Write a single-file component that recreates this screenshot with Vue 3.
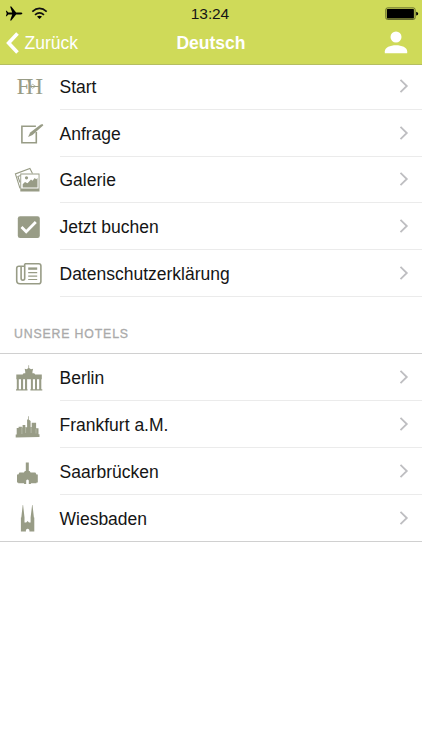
<template>
  <div class="screen">
    <header class="top">
      <div class="status-bar">
        <svg class="status-left" viewBox="0 0 50 20">
          <path d="M22.300 6.500c0-.6-.7-.9-1.700-.9h-4.500L11.300-.5h-1.200l2.100 6.100H8.300L6.700 3.700H5.900l.8 2.800-.8 2.800h.8l1.600-1.900h3.900l-2.100 6.100h1.200l4.800-6.100h4.500c1 0 1.700-.3 1.700-.9z" />
          <g class="wifi">
            <path d="M32.300 4.600Q39.500 -1.800 46.700 4.600" />
            <path d="M35 7.800Q39.500 3.900 44 7.800" />
          </g>
          <path d="M37 9.600Q39.500 7.900 42 9.600L39.500 12.100z" />
        </svg>
        <span class="clock">13:24</span>
        <svg class="battery" viewBox="0 0 34 14">
          <rect x=".8" y=".9" width="29.300" height="11.600" rx="1.800" fill="none" stroke="#646a2b" stroke-width="1" />
          <rect x="1.900" y="1.900" width="27" height="9.600" rx=".6" />
          <path d="M31.200 4.800q2 .6 2 1.900t-2 1.900z" />
        </svg>
      </div>
      <div class="nav-bar">
        <a class="back">
          <svg viewBox="0 0 14 24"><path d="M11.500 2.500L2.600 12l8.900 9.500" /></svg>
          <span>Zurück</span>
        </a>
        <h1 class="title">Deutsch</h1>
        <svg class="user" viewBox="0 0 24 24">
          <circle cx="12" cy="6" r="5.500" />
          <path d="M.8 22.300v-2c0-3.800 5.500-6 11.200-6s11.200 2.200 11.200 6v2z" />
        </svg>
      </div>
    </header>

    <template v-for="(section, s) in sections" :key="s">
      <h2 v-if="section.title" class="section-title">{{ section.title }}</h2>
      <ul class="menu" :class="{ 'menu-hotels': section.title }">
        <li v-for="item in section.items" :key="item.icon" class="row">
          <svg class="icon" viewBox="0 0 30 30">
            <g v-if="item.icon === 'logo'" class="logo">
              <text x="2.500" y="23.300" dx="0 -4.200">FH</text>
              <path class="line fine" d="M16 15.300l2.700-2 2.700 2-2.700 2z" />
            </g>
            <g v-else-if="item.icon === 'form'">
              <path class="line" d="M22.300 14v10.700H7.900V8.200h14" />
              <path d="M28.400 5.900l1 1.400L18.500 17l-4.400 1.900 2.100-4.400L26.400 6.700z" />
            </g>
            <g v-else-if="item.icon === 'gallery'">
              <path class="line thin" d="M6 23.300L1.400 8.900 15.900 3.400l2.600 5M6.500 10.500l-2.600 1 2.100 6" />
              <path fill-rule="evenodd" d="M6.300 8.500h19.200v18.100H6.300zM7.200 9.400v14.200h17.400V9.400z" />
              <path d="M8.700 22.400v-3.100l2.300-2.300 2.500 1.300 3.500-3.800 1.500 1.300 2.200-2.800 1.500 1.300 1.300-1.300v9.400z" />
              <circle cx="12.500" cy="12.800" r="1.600" />
            </g>
            <g v-else-if="item.icon === 'check'">
              <rect x="3.800" y="4.200" width="22" height="21.900" rx="2.300" />
              <path class="tick" d="M7.500 15l4.700 4.700 9.600-9.600" />
            </g>
            <g v-else-if="item.icon === 'news'">
              <path class="line" d="M10.700 4.700h14q2.200 0 2.200 2.200v15.500q0 2.300-2.300 2.300H6q-3.300 0-3.300-3.300V9.400q0-2.200 2.200-2.200h5.800M10.700 4.700v14.600q0 1.900-1.800 1.900t-1.800-1.900V7.200" />
              <path class="line thick" d="M14.200 9.600h9" />
              <path class="line thin" d="M14.200 13.600h9M14.200 17.100h9M14.200 20.500h9" />
            </g>
            <g v-else-if="item.icon === 'berlin'">
              <path d="M14.400 2.200h.7v2.700l1.900 1.300 2.100-.5-.6 2.800-.1 1.700h1.800l1 1.200h6.600v4.800H2.300v-4.800h6.300l1-1.200h1.700l-.1-1.700-.5-2.800 2 .5 1.700-1.300zM2.800 15h2v12h-2zM7 15h2.100v12H7zM11 15h2.100v12H11zM16.900 15h2v12h-2zM21 15h2v12h-2zM25.200 15h2.100v12h-2.100z" />
              <path d="M2 26.300h11.500v1.100H2zM16.400 26.300h11.900v1.100H16.400z" />
            </g>
            <g v-else-if="item.icon === 'frankfurt'">
              <path d="M1.700 27.400v-2.800h1V18h1.900v-1.300h3.200v.8h.8v-2.600h2.700v2.300h1.800V9.600h.9V6.300h.7v3.300l1.900 1.300v6.200h1.100v-4.300h4.400v5.400h2.400v6h1v2.900z" />
              <path class="gap" d="M7.900 18v6M11.600 17.500v5.500M17.100 17v6M22 19v4.500" />
            </g>
            <path v-else-if="item.icon === 'saarbruecken'" d="M11.800 6.500h3v8.600h.8l1 1.300h4.800l1.100 2.100h1.300v7.900h-1.300v.9h-5.600v.7h-2.100v-3.500q-1.300-1.800-2.600 0V28h-2.100v-.7H4.200v-.9H3v-7.900h1.300l1.100-2.100h4.500l1-1.300h.9z" />
            <path v-else d="M6.900 28.400V14.500h.4L8.700 2h.4l1.400 12.500v5h1.700l1.400-1.400 1.400 1.400h1.600v-5L18.100 2h.4l1.400 12.500h.4v13.900h-4.900v-1.500q-1.700-2.300-3.500 0v1.500z" />
          </svg>
          <div class="row-body">
            <span class="label">{{ item.label }}</span>
            <svg class="chevron" viewBox="0 0 10 16"><path d="M1.500 1.800L7.800 8l-6.300 6.200" /></svg>
          </div>
        </li>
      </ul>
    </template>
  </div>
</template>

<script setup>
const sections = [
  {
    items: [
      { icon: 'logo', label: 'Start' },
      { icon: 'form', label: 'Anfrage' },
      { icon: 'gallery', label: 'Galerie' },
      { icon: 'check', label: 'Jetzt buchen' },
      { icon: 'news', label: 'Datenschutzerklärung' }
    ]
  },
  {
    title: 'UNSERE HOTELS',
    items: [
      { icon: 'berlin', label: 'Berlin' },
      { icon: 'frankfurt', label: 'Frankfurt a.M.' },
      { icon: 'saarbruecken', label: 'Saarbrücken' },
      { icon: 'wiesbaden', label: 'Wiesbaden' }
    ]
  }
];
</script>

<style>
body {
  margin: 0;
  background: #fff;
}
</style>

<style scoped>
.screen {
  min-height: 750px;
  background: #fff;
  font-family: 'Liberation Sans', Arial, sans-serif;
  color: #151515;
}
.top {
  box-sizing: border-box;
  height: 65px;
  background: #cfda59;
  border-bottom: 1px solid #b5be61;
}
.status-bar {
  display: grid;
  grid-template-columns: 1fr auto 1fr;
  align-items: start;
  height: 27px;
  padding: 7px 4px 0 0;
  box-sizing: border-box;
}
.status-left {
  width: 50px;
  height: 20px;
  overflow: visible;
}
.wifi {
  fill: none;
  stroke: #111;
  stroke-width: 1.7;
}
.clock {
  font-size: 15.5px;
  line-height: 15px;
  letter-spacing: -0.1px;
  margin-top: -1px;
  padding-left: 2px;
}
.battery {
  width: 34px;
  height: 14px;
  justify-self: end;
  margin-right: -1px;
}
.nav-bar {
  display: grid;
  grid-template-columns: 1fr auto 1fr;
  align-items: center;
  height: 32px;
  padding: 0 14px 0 6px;
  color: #fff;
}
.back {
  display: flex;
  align-items: center;
  gap: 4.5px;
  font-size: 17.5px;
}
.back svg {
  width: 14px;
  height: 24px;
  fill: none;
  stroke: #fff;
  stroke-width: 3.6;
}
.title {
  margin: 0 0 0 8px;
  font-size: 17.5px;
  font-weight: 700;
}
.user {
  width: 24px;
  height: 24px;
  justify-self: end;
  fill: #fff;
}
.menu {
  list-style: none;
  margin: -2px 0 0;
  padding: 0;
}
.row {
  display: flex;
  align-items: center;
  height: 46.8px;
}
.icon {
  flex: none;
  width: 30px;
  height: 30px;
  margin: 0 15.5px 0 14px;
  fill: #989c86;
}
.row-body {
  flex: 1;
  display: flex;
  align-items: center;
  justify-content: space-between;
  box-sizing: border-box;
  height: 100%;
  padding-right: 13.5px;
  border-bottom: 1px solid #ebebeb;
}
.label {
  font-size: 17.5px;
  line-height: 20px;
  padding-top: 2px;
}
.chevron {
  width: 10px;
  height: 16px;
  fill: none;
  stroke: #bebec1;
  stroke-width: 1.8;
}
.section-title {
  box-sizing: border-box;
  height: 56.4px;
  margin: 0;
  padding: 29px 0 0 14px;
  font-size: 12.3px;
  line-height: 16px;
  font-weight: 400;
  letter-spacing: 0.85px;
  color: #aaa;
  -webkit-text-stroke: 0.3px #aaa;
}
.menu-hotels {
  margin-top: 0;
  border-top: 1px solid #d0d0d0;
  border-bottom: 1px solid #d0d0d0;
}
.menu-hotels .row:last-child {
  height: 46px;
}
.menu-hotels .row:last-child .row-body {
  border-bottom: 0;
}
.logo {
  font-family: 'Liberation Serif', serif;
  font-size: 24px;
}
.line {
  fill: none;
  stroke: #989c86;
  stroke-width: 1.6;
}
.thin {
  stroke-width: 1.1;
}
.fine {
  stroke-width: 0.7;
}
.thick {
  stroke-width: 2.4;
}
.tick {
  fill: none;
  stroke: #fff;
  stroke-width: 2.8;
}
.gap {
  fill: none;
  stroke: #c6c9ba;
  stroke-width: 0.6;
}
</style>
